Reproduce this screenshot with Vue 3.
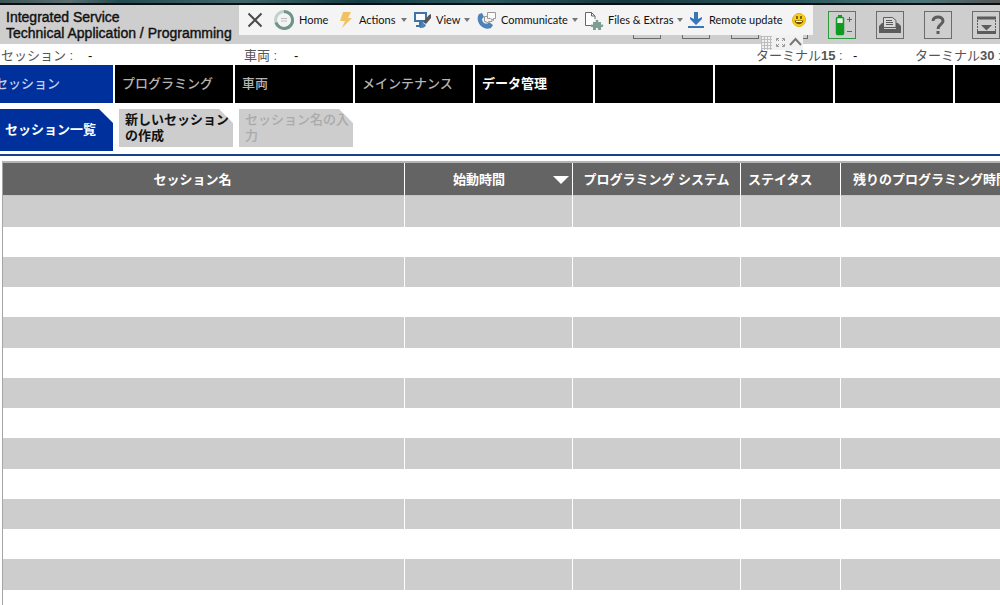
<script setup>
const mainTabs = [
  { label: 'セッション', state: 'active' },
  { label: 'プログラミング', state: 'muted' },
  { label: '車両', state: 'muted' },
  { label: 'メインテナンス', state: 'muted' },
  { label: 'データ管理', state: 'bright' },
]
const emptyTabs = 4
const rows = 14
</script>

<template>
  <div class="app">
    <div class="desktop"></div>
    <header class="header">
      <h1 class="title">Integrated Service<br>Technical Application / Programming</h1>
      <div class="covered">
        <span v-for="n in 4" :key="n" class="box"></span>
      </div>
      <div class="tools">
        <button class="box green" type="button" aria-label="Battery">
          <svg width="26" height="26" viewBox="0 0 26 26">
            <rect x="7.5" y="5.500" width="7" height="17" rx="1" fill="#dff0df" stroke="#109a22" stroke-width="1.500" />
            <path d="M9 3h4v3H9zM8 11h6v11H8z" fill="#109a22" />
            <path d="M18 7.500h5M20.500 5v5M18 19.500h5" stroke="#109a22" stroke-width="1" />
          </svg>
        </button>
        <button class="box" type="button" aria-label="Print">
          <svg width="26" height="26" viewBox="0 0 26 26">
            <path d="M2 14h5v3h12v-3h5v7H2z" fill="#5c5c5c" />
            <path d="M2 14l3-3h2v4zM24 14l-3-3h-2v4z" fill="#5c5c5c" />
            <path d="M6.500 15.500v-10h9l3.500 3v7z" fill="#d8d8d8" stroke="#5c5c5c" />
            <path d="M9 8.500h6M9 10.500h7M9 12.500h7" stroke="#5c5c5c" />
          </svg>
        </button>
        <button class="box" type="button" aria-label="Help">
          <svg width="26" height="26" viewBox="0 0 26 26">
            <path d="M8 9C8 3.500 18 3.500 18 9c0 3.500-5 3.500-5 8" fill="none" stroke="#5c5c5c" stroke-width="3" />
            <path d="M11.500 19h3v3h-3z" fill="#5c5c5c" />
          </svg>
        </button>
        <button class="box" type="button" aria-label="Minimize">
          <svg width="26" height="26" viewBox="0 0 26 26">
            <path d="M4 6h19M4 20.500h19" stroke="#5c5c5c" stroke-width="3" />
            <path d="M4.500 8v11M22.500 8v11" stroke="#5c5c5c" stroke-dasharray="2 1" />
            <path d="M8 13h11l-5.500 5.500z" fill="#5c5c5c" />
          </svg>
        </button>
      </div>

      <div class="remote">
        <button class="close" type="button" aria-label="Close">
          <svg width="16" height="16" viewBox="0 0 16 16"><path d="M1.500 1.500l13 13M14.500 1.500l-13 13" stroke="#4a4a4a" stroke-width="2" /></svg>
        </button>
        <button class="home" type="button">
          <svg width="22" height="22" viewBox="0 0 22 22" fill="none">
            <circle cx="11" cy="11" r="8.500" stroke="#c3cfcb" stroke-width="3" />
            <path d="M11 2.500a8.500 8.500 0 1 1-8 11" stroke="#6f9488" stroke-width="3" />
            <path d="M8 9.500h6M8 12h6" stroke="#bbb" />
          </svg>
          Home
        </button>
        <button class="actions" type="button">
          <svg width="14" height="18" viewBox="0 0 14 18"><path d="M4 1h8L9 7h4L3 17l3-7H1z" fill="#f0c266" /></svg>
          Actions<i class="caret"></i>
        </button>
        <button class="view" type="button">
          <svg width="19" height="18" viewBox="0 0 19 18">
            <rect x="2" y="2" width="11" height="8" fill="#f8fbff" stroke="#3f74a8" stroke-width="2" />
            <path d="M6 11h4v3H6zM3 14h8v2H3z" fill="#3f74a8" />
            <path d="M18 3v4l-5 6-3-2 6-7z" fill="#555" /><path d="M9 11l4 3c-1 3-4 3-7 3 2-1 2-4 3-6z" fill="#4b83ba" />
          </svg>
          View<i class="caret"></i>
        </button>
        <button class="communicate" type="button">
          <svg width="20" height="19" viewBox="0 0 20 19">
            <path d="M2 3l3-1 2 4-2 2c0 3 3 5 5 5l2-2 4 3-2 3C6 20-1 12 1 5z" fill="#4b83ba" />
            <path d="M10.500 1.500h8v6h-2v2l-3-2h-3z" fill="#fafafa" stroke="#999" />
            <path d="M10 5.500H7.500v5h1.500v2l3-2h3V8" fill="none" stroke="#999" />
          </svg>
          Communicate<i class="caret"></i>
        </button>
        <button class="files" type="button">
          <svg width="20" height="19" viewBox="0 0 20 19">
            <path d="M8 14.500H1.500v-13h6l3.500 3.500v3M7.500 1.500V5H11" fill="#fdfdfd" stroke="#666" />
            <path d="M9 11h3c-2-3 4-3 2 0h3v3c3-2 3 3 0 2v3h-3c1-3-3-3-2 0H9v-3c-3 1-3-4 0-2z" fill="#7f9d90" />
          </svg>
          Files &amp; Extras<i class="caret"></i>
        </button>
        <button class="update" type="button">
          <svg width="18" height="18" viewBox="0 0 18 18">
            <path d="M7 1h4v7l4-2v2l-6 6-6-6V6l4 2zM1 15h16v2H1z" fill="#3976b5" />
          </svg>
          Remote update
        </button>
        <button class="smile" type="button" aria-label="Feedback">
          <svg width="14" height="14" viewBox="0 0 14 14">
            <circle cx="7" cy="7" r="6.500" fill="#f8cf1c" stroke="#e2b110" />
            <path d="M5 3v3M9 3v3" stroke="#594608" stroke-width="1.500" />
            <path d="M2.500 7.500h9c-1 5-8 5-9 0z" fill="#6b4b08" /><path d="M4 8.500h6" stroke="#fff" />
          </svg>
        </button>
        <div class="grip">
          <svg width="42" height="15" viewBox="0 0 42 15" fill="none">
            <path d="M.5 1v14M3.500 1v14M6.500 1v14M9.500 1v14M0 1.500h11M0 4.500h11M0 7.500h11M0 10.500h11M0 13.500h11" stroke="#bdbdbd" />
            <path d="M15.500 6V3.500H18M21 3.500h2.500V6M23.500 9v2.500H21M18 11.500h-2.500V9M16 4l2 2M23 4l-2 2M23 11l-2-2M16 11l2-2" stroke="#999" />
            <path d="M29 10l5.500-6L40 10" stroke="#777" stroke-width="2" />
          </svg>
        </div>
      </div>
    </header>

    <dl class="status">
      <div><dt class="w-session">セッション :</dt><dd>-</dd></div>
      <div><dt class="w-car">車両 :</dt><dd>-</dd></div>
      <div><dt class="w-terminal">ターミナル<b>15</b> :</dt><dd>-</dd></div>
      <div><dt class="w-terminal">ターミナル<b>30</b> :</dt></div>
    </dl>

    <nav class="tabs">
      <button v-for="t in mainTabs" :key="t.label" type="button" :class="t.state">{{ t.label }}</button>
      <span v-for="n in emptyTabs" :key="n"></span>
    </nav>

    <nav class="subtabs">
      <button type="button" class="current">セッション一覧</button>
      <button type="button">新しいセッションの作成</button>
      <button type="button" disabled>セッション名の入力</button>
    </nav>

    <main class="content">
      <table>
        <colgroup><col class="c-name"><col class="c-time"><col class="c-time"><col class="c-state"><col></colgroup>
        <thead>
          <tr>
            <th class="name">セッション名</th>
            <th>
              <button type="button" class="sort">
                <span>始動時間</span>
                <svg width="16" height="8" viewBox="0 0 16 8"><path d="M0 0h16L8 8z" fill="#fff" /></svg>
              </button>
            </th>
            <th>プログラミング システム</th>
            <th class="left">ステイタス</th>
            <th class="remaining">残りのプログラミング時間</th>
          </tr>
        </thead>
        <tbody>
          <tr v-for="r in rows" :key="r"><td v-for="c in 5" :key="c"></td></tr>
        </tbody>
      </table>
    </main>
  </div>
</template>

<style>
body { margin: 0; background: #fff; }
</style>

<style scoped>
.app {
  height: 100vh;
  overflow: hidden;
  background: #fff;
  font-family: "Liberation Sans", "Noto Sans CJK JP", sans-serif;
  font-size: 13px;
  line-height: 16px;
}
button {
  margin: 0;
  padding: 0;
  border: 0;
  background: none;
  font: inherit;
  color: inherit;
}
.desktop {
  height: 3px;
  border-bottom: 2px solid #0b0e10;
  background: linear-gradient(90deg, #3b5557, #5a6d70 7%, #234a50 12%, #41666a 24%, #153c43 36%, #2c5a60 48%, #16373d 62%, #2b575c 80%, #4d7679 92%, #555);
}
.header {
  position: relative;
  display: flex;
  align-items: center;
  height: 39px;
  background: #cecece;
}
.title {
  flex: 1;
  margin: 0;
  padding-left: 6px;
  font-size: 14px;
  line-height: 16px;
  font-weight: 400;
  color: #111;
  -webkit-text-stroke: 0.4px #111;
  white-space: nowrap;
}
.covered { display: flex; gap: 21px; margin-right: 20px; }
.tools { display: flex; gap: 20px; }
.box {
  box-sizing: border-box;
  flex: none;
  width: 28px;
  height: 28px;
  border: 1px solid #6c6c6c;
}
.box svg { display: block; }
.green { border-color: #2c9a3a; }

.remote {
  position: absolute;
  left: 239px;
  top: 0;
  display: flex;
  align-items: center;
  box-sizing: border-box;
  width: 574px;
  height: 30px;
  padding-left: 8px;
  background: #f4f4f4;
  font-family: Lato, "Open Sans", sans-serif;
  font-size: 11px;
  color: #111;
}
.remote button {
  display: flex;
  flex: none;
  align-items: center;
  gap: 4px;
  white-space: nowrap;
}
.remote .close { width: 26px; }
.remote .home { width: 66px; }
.remote .actions { width: 74px; gap: 6px; }
.remote .view { width: 64px; }
.remote .communicate { width: 107px; }
.remote .files { width: 103px; }
.remote .update { width: 105px; }
.caret {
  border: 3px solid transparent;
  border-top: 4px solid #777;
  border-bottom: 0;
}
.grip {
  position: absolute;
  right: 10px;
  top: 30px;
  height: 15px;
  background: #f1f1f1;
}
.grip svg { display: block; }

.status {
  display: grid;
  grid-template-columns: 243px 1fr 159px 85px;
  align-items: end;
  height: 21px;
  margin: 0;
  padding-left: 1px;
  line-height: 18px;
  color: #555;
}
.status div { display: flex; white-space: nowrap; }
.status dd { margin: 0; color: #111; }
.w-session { width: 87px; }
.w-car { width: 50px; }
.w-terminal { width: 97px; }

.tabs {
  display: flex;
  gap: 2px;
  height: 38px;
  margin-left: -5px;
}
.tabs > * {
  flex: none;
  box-sizing: border-box;
  width: 118px;
  padding-left: 7px;
  background: #000;
  text-align: left;
  color: #b4b4b4;
  font-weight: 500;
}
.tabs > :last-child { flex: 1 0 45px; }
.tabs .active { padding-left: 0; background: #00309c; color: #c4d0ee; }
.tabs .bright { color: #fff; font-weight: 700; }

.subtabs {
  display: flex;
  align-items: flex-start;
  gap: 6px;
  margin-left: -1px;
  padding-top: 6px;
  height: 45px;
  border-bottom: 2px solid #1c3f87;
}
.subtabs button {
  box-sizing: border-box;
  width: 114px;
  height: 38px;
  padding: 0 0 0 6px;
  background: #cdcdcd;
  clip-path: polygon(0 0, 100px 0, 100% 14px, 100% 100%, 0 100%);
  text-align: left;
  font-weight: 700;
  color: #111;
}
.subtabs .current { height: 42px; background: #00309c; color: #fff; }
.subtabs button:disabled { color: #aaa; font-weight: 500; }

.content {
  margin: 5px 0 0 2px;
  border-top: 2px solid #b5b5b5;
  border-left: 1px solid #a5a5a5;
}
table {
  width: 100%;
  table-layout: fixed;
  border-collapse: separate;
  border-spacing: 0;
}
.c-name { width: 402px; }
.c-time { width: 168px; }
.c-state { width: 100px; }
th, td { box-sizing: border-box; padding: 0; border-right: 1px solid #fff; }
th:last-child, td:last-child { border-right: 0; }
th {
  height: 33px;
  padding-top: 2px;
  border-bottom: 1px solid #c4c4c4;
  overflow: hidden;
  background: #646464;
  color: #fff;
  font-weight: 700;
  white-space: nowrap;
}
.name { padding-right: 22px; }
.left { padding-left: 7px; text-align: left; }
.remaining { padding-left: 12px; text-align: left; }
.sort { display: flex; align-items: center; width: 100%; padding-right: 3px; box-sizing: border-box; }
.sort span { flex: 1; }
td { height: 30px; }
tr:nth-child(4n + 1) td { height: 31px; }
tr:nth-child(odd) td { background: #cdcdcd; }
</style>
